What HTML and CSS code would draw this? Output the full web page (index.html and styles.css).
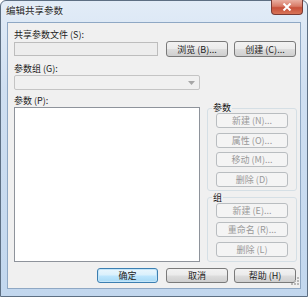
FILE: index.html
```html
<!DOCTYPE html>
<html lang="zh-CN">
<head>
  <meta charset="UTF-8" />
  <title>编辑共享参数</title>
  <link rel="stylesheet" href="styles.css">
</head>
<body>

<div class="window">
  <div class="titlebar">
    <span class="title">编辑共享参数</span>
    <div class="close-btn">
      <svg width="10" height="8" viewBox="0 0 10 8"><path d="M1.5 0.5 L8.5 7.5 M8.5 0.5 L1.5 7.5" stroke="#fff" stroke-width="2"/></svg>
    </div>
  </div>

  <div class="client">
    <div class="label">共享参数文件 (S):</div>
    <div class="file-row">
      <div class="textbox"></div>
      <button class="btn">浏览 (B)...</button>
      <button class="btn">创建 (C)...</button>
    </div>

    <div class="label label-gap">参数组 (G):</div>
    <div class="combo">
      <svg width="7" height="4" viewBox="0 0 7 4"><path d="M0 0 H7 L3.5 4 Z" fill="#a6a6a6"/></svg>
    </div>

    <div class="main">
      <div class="left">
        <div class="label">参数 (P):</div>
        <div class="listbox"></div>
      </div>
      <div class="right">
        <fieldset class="group">
          <legend>参数</legend>
          <button class="btn" disabled>新建 (N)...</button>
          <button class="btn" disabled>属性 (O)...</button>
          <button class="btn" disabled>移动 (M)...</button>
          <button class="btn" disabled>删除 (D)</button>
        </fieldset>
        <fieldset class="group">
          <legend>组</legend>
          <button class="btn" disabled>新建 (E)...</button>
          <button class="btn" disabled>重命名 (R)...</button>
          <button class="btn" disabled>删除 (L)</button>
        </fieldset>
      </div>
    </div>

    <div class="footer">
      <button class="btn default">确定</button>
      <button class="btn">取消</button>
      <button class="btn">帮助 (H)</button>
    </div>

    <div class="grip">
      <svg width="10" height="10" viewBox="0 0 10 10" fill="#b8b8b8">
        <rect x="8" y="0" width="2" height="2"/>
        <rect x="5" y="3" width="2" height="2"/><rect x="8" y="3" width="2" height="2"/>
        <rect x="2" y="6" width="2" height="2"/><rect x="5" y="6" width="2" height="2"/><rect x="8" y="6" width="2" height="2"/>
      </svg>
    </div>
  </div>
</div>

</body>
</html>
```

FILE: styles.css
```css
body {
  margin: 0;
  font-family: "Noto Sans CJK SC", "DejaVu Sans", sans-serif;
  font-size: 9px;
  color: #222;
  background: #fff;
}

.window {
  width: 308px;
  height: 297px;
  box-sizing: border-box;
  border: 1px solid #5d6f83;
  border-radius: 6px 6px 0 0;
  background: linear-gradient(to bottom, #e2ecf7 0%, #cfdff1 30%, #c2d7ee 100%);
  display: flex;
  flex-direction: column;
}

.titlebar {
  height: 21px;
  display: flex;
  align-items: flex-start;
  padding-left: 5px;
}

.title {
  font-size: 9.5px;
  line-height: 13px;
  margin-top: 3px;
  color: #2a2a2a;
  text-shadow: 0 0 4px rgba(255,255,255,0.9);
}

.close-btn {
  margin-left: auto;
  margin-right: 4px;
  margin-top: -1px;
  width: 32px;
  height: 15px;
  box-sizing: border-box;
  border: 1px solid #7a3b34;
  border-top: none;
  border-radius: 0 0 4px 4px;
  background: linear-gradient(to bottom, #eab0a2 0%, #d87a66 45%, #c7503a 55%, #d87458 100%);
  display: flex;
  justify-content: center;
  align-items: center;
}

.client {
  margin: 0 6px 7px 6px;
  flex: 1;
  background: #f0f0f0;
  border: 1px solid #8fa8c4;
  padding: 5px 4px 5px 6px;
  display: flex;
  flex-direction: column;
  position: relative;
}

.label {
  line-height: 13px;
  height: 13px;
  white-space: nowrap;
}

.label-gap {
  margin-top: 5px;
}

.file-row {
  display: flex;
  align-items: center;
  height: 16px;
}

.textbox {
  width: 144px;
  height: 14px;
  box-sizing: border-box;
  border: 1px solid #bdbdbd;
  background: #ededed;
  margin-right: 8px;
}

.file-row .btn + .btn {
  margin-left: 6px;
}

.btn {
  font-family: inherit;
  font-size: 9px;
  line-height: 13px;
  color: #222;
  width: 62px;
  height: 16px;
  padding: 0;
  box-sizing: border-box;
  border: 1px solid #7a7a7a;
  border-radius: 3px;
  background: linear-gradient(to bottom, #f2f2f2 0%, #ebebeb 48%, #dddddd 52%, #cfcfcf 100%);
  white-space: nowrap;
}

.btn:disabled {
  color: #999;
  border-color: #b9bdc0;
  background: #f4f4f4;
}

.btn.default {
  border-color: #3c7fb1;
  background: linear-gradient(to bottom, #eaf6fd 0%, #d9f0fc 48%, #bee6fd 52%, #a7d9f5 100%);
  box-shadow: inset 0 0 0 1px #c3e5f9;
}

.combo {
  width: 186px;
  height: 15px;
  box-sizing: border-box;
  border: 1px solid #c4c4c4;
  border-radius: 2px;
  background: #f0f0f0;
  display: flex;
  justify-content: flex-end;
  align-items: center;
  padding-right: 4px;
}

.main {
  display: grid;
  grid-template-columns: 186px 90px;
  column-gap: 7px;
  height: 172px;
}

.left {
  display: flex;
  flex-direction: column;
  padding-top: 4px;
}

.listbox {
  flex: 1;
  background: #fff;
  border: 1px solid #8e939b;
}

.right {
  display: flex;
  flex-direction: column;
  gap: 2px;
  padding-top: 13px;
}

.group {
  margin: 0;
  padding: 0 8px 3px 8px;
  border: 1px solid #d5dfe5;
  border-radius: 3px;
  display: flex;
  flex-direction: column;
  gap: 4.6px;
  min-width: 0;
}

.group + .group {
  padding-bottom: 4px;
}

.group legend {
  padding: 0 1px;
  margin-left: -4px;
  line-height: 10px;
  font-size: 9px;
  color: #111;
}

.group .btn {
  width: 72px;
  height: 15px;
}

.footer {
  display: flex;
  justify-content: flex-end;
  gap: 6px;
  margin-top: 6px;
}

.footer .btn {
  height: 15px;
}

.footer .btn.default {
  width: 61px;
  margin-right: 2px;
}

.grip {
  position: absolute;
  right: 1px;
  bottom: 1px;
  line-height: 0;
}
```
